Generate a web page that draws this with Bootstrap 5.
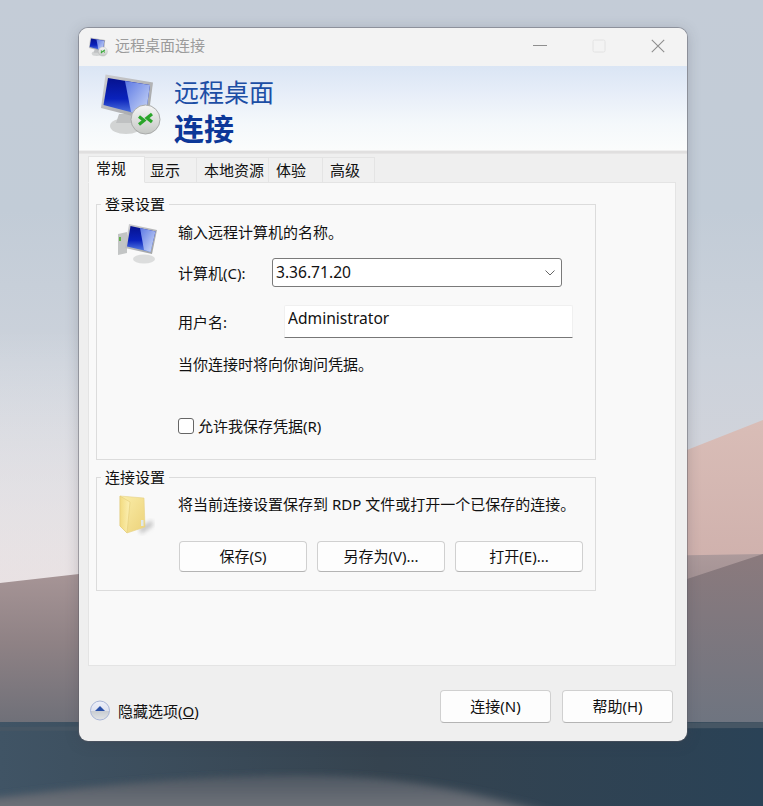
<!DOCTYPE html>
<html lang="zh-CN">
<head>
<meta charset="utf-8">
<title>远程桌面连接</title>
<link rel="stylesheet" href="https://cdn.jsdelivr.net/npm/bootstrap@5.3.0/dist/css/bootstrap.min.css">
<style>
html,body{margin:0;height:100%;background:#bcc7d3}
body{font-family:"Noto Sans","Noto Sans CJK SC",sans-serif;font-size:15px;line-height:20px;color:#111}
.desk{position:relative;width:763px;height:806px;overflow:hidden;padding:28px 0 0 79px}
.wall{position:absolute;inset:0;width:763px;height:806px}
.rdp{position:relative;width:608px;height:713px;background:#efefef;border-radius:9px;overflow:hidden;box-shadow:0 0 0 1px rgba(90,90,100,.45),0 2px 14px rgba(60,60,70,.25)}
.tbar{height:38px;background:#f3f3f3}
.tbar .ttl{font-size:15px;color:#9b9b9b;margin:0 0 4px 6px}
.tbar .ico{margin-left:8px}
.wbtn{width:59px;height:36px}
.banner{height:84px;background:linear-gradient(#dae5f4,#e6edf8 30%,#f4f8fb 68%,#fbfcfc)}
.banner .txt{margin-left:8px;padding-top:8px}
.b1{font-size:25px;line-height:37px;color:#1c4ea5}
.b2{font-size:30px;line-height:36px;font-weight:700;color:#0c3798}
.sep{height:4px;background:#e0dfdf;border-top:1px solid #f0f0f0;border-bottom:1px solid #e6e5e5}
.tabs{padding:2px 0 0 9px;border:0;height:28px;align-items:flex-end;flex-wrap:nowrap}
.tabs .nav-link{height:26px;margin:0 0 -1px;padding:2px 0 0 7px;border:1px solid #e4e4e4;border-left:0;border-radius:0;color:#111;background:#f0f0f0;white-space:nowrap;font-size:15px;line-height:20px}
.tabs .nav-link.active{height:27px;padding:1px 0 0 7px;border:1px solid #e4e4e4;border-bottom-color:#f9f9f9;background:#f9f9f9;color:#111;position:relative;z-index:1}
.t1 .nav-link{width:57px}.t2 .nav-link{width:52px;padding-left:5px}.t3 .nav-link{width:72px}.t4 .nav-link{width:54px}.t5 .nav-link{width:52px}
.panel{width:588px;height:484px;margin-left:9px;background:#f9f9f9;border:1px solid #e4e4e4;padding:11px 0 0 7px}
fieldset.grp{width:500px;border:1px solid #dcdcdc;padding:0;margin:0}
fieldset.grp legend{float:none;width:auto;margin:0 0 0 4px;padding:0 4px;font-size:15px;line-height:20px}
fieldset.g2{margin-top:7px}
.icol{width:81px;flex:none}
.g1 .body{padding:8px 0 23px}
.g2 .body{padding:7px 0 18px}
.lab1{width:94px;flex:none}
.lab2{width:106px;flex:none}
.combo{width:290px;height:29px;padding:0 30px 2px 3px;font:inherit;font-size:15.6px;color:#111;border:1px solid #7a7a7a;border-radius:3px;box-shadow:none;background-color:#fff;background-position:right 4px center;background-size:14px 14px;background-image:url("data:image/svg+xml,%3csvg xmlns='http://www.w3.org/2000/svg' viewBox='0 0 14 14'%3e%3cpath fill='none' stroke='%23666' d='M2.5 4.5 7 9l4.5-4.5'/%3e%3c/svg%3e")}
.user{width:289px;height:33px;padding:0 3px 8px;font:inherit;font-size:15.6px;color:#111;border:1px solid #f0f0f0;border-bottom:1px solid #777;border-radius:2px 2px 0 0;background:#fff;box-shadow:none}
.mt16{margin-top:16px}.mt18{margin-top:18px}.mt42{margin-top:42px}.mt27{margin-top:27px}
.form-check .chk{width:16px;height:16px;float:none;margin:0 4px 0 0;border:1px solid #666;border-radius:3px;background-color:#fff;flex:none}
.keep{min-height:20px;margin-bottom:0}
.btns{margin-left:1px;gap:10px}
.wb{width:128px;height:31px;padding:0 0 2px;font-size:15px;line-height:20px;color:#111;background:#fdfdfd;border:1px solid #d0d0d0;border-bottom-color:#b4b4b4;border-radius:4px}
.wb2{width:111px;height:33px;padding-bottom:2px}
.foot{padding:0 14px 0 11px}
.more-wrap{margin-top:34px}
.foot-btns{margin-top:24px;gap:11px}
</style>
</head>
<body>
<div class="desk">
  <svg class="wall" viewBox="0 0 763 806" preserveAspectRatio="none" aria-hidden="true">
    <defs>
      <linearGradient id="sky" x1="0" y1="0" x2="0" y2="1">
        <stop offset="0" stop-color="#c4ccd7"/><stop offset=".35" stop-color="#c2ccd7"/><stop offset=".6" stop-color="#ccd2db"/><stop offset="1" stop-color="#d8d5da"/>
      </linearGradient>
      <linearGradient id="skyl" x1="0" y1="0" x2="0" y2="1">
        <stop offset="0" stop-color="#fff" stop-opacity="0"/><stop offset="1" stop-color="#efe6e6" stop-opacity=".75"/>
      </linearGradient>
      <linearGradient id="pink" x1="0" y1="0" x2="0" y2="1">
        <stop offset="0" stop-color="#d9bdb7"/><stop offset="1" stop-color="#cdaeaa"/>
      </linearGradient>
      <linearGradient id="dune" x1="0" y1="0" x2="0" y2="1">
        <stop offset="0" stop-color="#ad9a9b"/><stop offset=".5" stop-color="#8f8285"/><stop offset="1" stop-color="#6c6e77"/>
      </linearGradient>
      <linearGradient id="dune2" x1="0" y1="0" x2="0" y2="1">
        <stop offset="0" stop-color="#8b7a7d"/><stop offset="1" stop-color="#6d7480"/>
      </linearGradient>
      <linearGradient id="water" x1="0" y1="0" x2="1" y2="0">
        <stop offset="0" stop-color="#405465"/><stop offset=".5" stop-color="#35434f"/><stop offset="1" stop-color="#2a4256"/>
      </linearGradient>
      <linearGradient id="sand" x1="0" y1="0" x2="0" y2="1">
        <stop offset="0" stop-color="#4c5661"/><stop offset=".6" stop-color="#666b73"/><stop offset="1" stop-color="#72757b"/>
      </linearGradient>
      <filter id="blur" x="-10%" y="-50%" width="120%" height="200%"><feGaussianBlur stdDeviation="14 3"/></filter>
    </defs>
    <rect width="763" height="600" fill="url(#sky)"/>
    <rect x="0" y="330" width="90" height="260" fill="url(#skyl)"/>
    <polygon points="560,500 763,420 763,600 560,600" fill="url(#pink)"/>
    <polygon points="0,583 79,574 400,560 763,554 763,730 0,730" fill="url(#dune)"/>
    <polygon points="500,640 687,579 763,554 763,730 500,730" fill="url(#dune2)"/>
    <rect y="722" width="763" height="84" fill="url(#water)"/>
    <polygon points="0,727 763,722 763,728 0,731" fill="#465664"/>
    <path d="M-40 815V802C50 792 150 776 300 775 400 775 470 790 550 815Z" fill="url(#sand)" filter="url(#blur)"/>
  </svg>

  <div class="rdp d-flex flex-column">
    <div class="tbar d-flex align-items-center">
      <svg class="ico" width="22" height="22" viewBox="0 0 70 70" aria-hidden="true"><use href="#mon"/></svg>
      <span class="ttl">远程桌面连接</span>
      <div class="ms-auto d-flex align-self-start">
        <div class="wbtn d-flex align-items-center justify-content-center"><svg width="14" height="14" viewBox="0 0 14 14"><path d="M0 6.500h14" stroke="#8e8e8e" stroke-width="1"/></svg></div>
        <div class="wbtn d-flex align-items-center justify-content-center"><svg width="14" height="14" viewBox="0 0 14 14"><rect x="1" y="1" width="12" height="12" rx="1.500" fill="none" stroke="#e2e2e2"/></svg></div>
        <div class="wbtn d-flex align-items-center justify-content-center"><svg width="14" height="14" viewBox="0 0 14 14"><path d="M.8.8l12.4 12.4M13.2.8.8 13.2" stroke="#8e8e8e" stroke-width="1.100"/></svg></div>
      </div>
    </div>

    <div class="banner d-flex">
      <svg width="87" height="70" viewBox="-16 0 87 70" class="mt-1" aria-hidden="true">
        <defs>
          <linearGradient id="fr" x1="0" y1="0" x2="1" y2="1"><stop offset="0" stop-color="#cfcfd1"/><stop offset="1" stop-color="#9ea0a2"/></linearGradient>
          <linearGradient id="scr" x1="0" y1="0" x2="0" y2="1"><stop offset="0" stop-color="#06128e"/><stop offset=".55" stop-color="#0a22bc"/><stop offset="1" stop-color="#5f86e6"/></linearGradient>
          <linearGradient id="gl" x1="0" y1="0" x2="1" y2="1"><stop offset="0" stop-color="#5c78e4"/><stop offset="1" stop-color="#d3dff8"/></linearGradient>
          <linearGradient id="bd" x1="0" y1="0" x2="0" y2="1"><stop offset="0" stop-color="#f6f6f6"/><stop offset="1" stop-color="#c4c7c4"/></linearGradient>
          <symbol id="mon" viewBox="0 0 70 70">
            <ellipse cx="31" cy="56" rx="16" ry="8" fill="#d2d4d4"/>
            <path d="M24 44h14l3 9H21z" fill="#bfc1c2"/>
            <polygon points="10.500,4.500 58,12.500 53,50 6,38" fill="url(#fr)"/>
            <polygon points="13,8 55,15 50.500,46 8.500,35" fill="url(#scr)"/>
            <polygon points="30,11 55,15 50.500,46 36,42" fill="url(#gl)"/>
            <circle cx="50.500" cy="49.500" r="14.500" fill="url(#bd)" stroke="#a9abaa"/>
            <path d="M44 46.500l5 4-5 4M57 44l-5 4 5 4" fill="none" stroke="#2aa52a" stroke-width="3.200"/>
          </symbol>
        </defs>
        <use href="#mon" width="70" height="70"/>
      </svg>
      <div class="txt">
        <div class="b1">远程桌面</div>
        <div class="b2">连接</div>
      </div>
    </div>
    <div class="sep"></div>

    <ul class="nav nav-tabs tabs">
      <li class="nav-item t1"><a class="nav-link active" href="#">常规</a></li>
      <li class="nav-item t2"><a class="nav-link" href="#">显示</a></li>
      <li class="nav-item t3"><a class="nav-link" href="#">本地资源</a></li>
      <li class="nav-item t4"><a class="nav-link" href="#">体验</a></li>
      <li class="nav-item t5"><a class="nav-link" href="#">高级</a></li>
    </ul>

    <div class="panel">
      <fieldset class="grp g1">
        <legend>登录设置</legend>
        <div class="d-flex body">
          <div class="icol ps-3">
            <svg width="48" height="44" viewBox="0 0 48 44" aria-hidden="true">
              <polygon points="5,12 14,10 14,31 5,33" fill="#c3c5c5"/>
              <rect x="6" y="15" width="2" height="4" fill="#63b04a"/>
              <ellipse cx="31" cy="37" rx="11" ry="4.500" fill="#dcdddd"/>
              <polygon points="16,2 44,8 39,32 12,26" fill="url(#fr)"/>
              <polygon points="17.500,4 42.500,9.500 37.500,30 14,24.500" fill="url(#scr)"/>
              <polygon points="27,6 42.500,9.500 37.500,30 31,28" fill="url(#gl)"/>
            </svg>
          </div>
          <div class="flex-grow-1">
            <div>输入远程计算机的名称。</div>
            <div class="d-flex align-items-center mt16">
              <label class="lab1" for="c">计算机(C):</label>
              <select id="c" class="form-select combo"><option>3.36.71.20</option></select>
            </div>
            <div class="d-flex align-items-center mt18">
              <label class="lab2" for="u">用户名:</label>
              <input id="u" class="form-control user" value="Administrator">
            </div>
            <div class="mt16">当你连接时将向你询问凭据。</div>
            <div class="form-check keep d-flex align-items-center p-0 mt42">
              <input id="s" class="form-check-input chk" type="checkbox">
              <label class="form-check-label" for="s">允许我保存凭据(R)</label>
            </div>
          </div>
        </div>
      </fieldset>

      <fieldset class="grp g2">
        <legend>连接设置</legend>
        <div class="d-flex body">
          <div class="icol ps-3">
            <svg width="44" height="46" viewBox="0 0 44 46" aria-hidden="true">
              <defs>
                <linearGradient id="fb" x1="0" y1="0" x2="1" y2="1"><stop offset="0" stop-color="#fbeeaa"/><stop offset="1" stop-color="#ecd27a"/></linearGradient>
                <linearGradient id="ff" x1="0" y1="0" x2="1" y2="0"><stop offset="0" stop-color="#f2db80"/><stop offset="1" stop-color="#fcf0b4"/></linearGradient>
                <filter id="fs"><feGaussianBlur stdDeviation="2"/></filter>
              </defs>
              <polygon points="26,34 39,26 40,32 28,40" fill="#9b9b9b" opacity=".55" filter="url(#fs)"/>
              <polygon points="7,2 31,4 32,33 14,39 7,32" fill="url(#fb)" stroke="#e6d187" stroke-width=".6"/>
              <polygon points="7,2 17,8 14,39 7,32" fill="url(#ff)" stroke="#e3cb78" stroke-width=".6"/>
              <rect x="28" y="26" width="2.500" height="6" fill="#dfe8ea"/>
            </svg>
          </div>
          <div class="flex-grow-1">
            <div>将当前连接设置保存到 RDP 文件或打开一个已保存的连接。</div>
            <div class="d-flex mt27 btns">
              <button class="btn wb" type="button">保存(S)</button>
              <button class="btn wb" type="button">另存为(V)...</button>
              <button class="btn wb" type="button">打开(E)...</button>
            </div>
          </div>
        </div>
      </fieldset>
    </div>

    <div class="foot d-flex align-items-start">
      <div class="d-flex align-items-center more-wrap">
        <svg width="20" height="21" viewBox="0 0 20 21" aria-hidden="true">
          <defs><linearGradient id="ub" x1="0" y1="0" x2="0" y2="1"><stop offset="0" stop-color="#eef0fa"/><stop offset=".5" stop-color="#dfe3ef"/><stop offset=".55" stop-color="#c9cdd2"/><stop offset="1" stop-color="#e2e4e6"/></linearGradient></defs>
          <circle cx="10" cy="10.500" r="9.500" fill="url(#ub)" stroke="#a9b5d6"/>
          <path d="M10 6l5 5H5z" fill="#2a50a8"/>
        </svg>
        <span class="ms-2">隐藏选项(<u>O</u>)</span>
      </div>
      <div class="ms-auto d-flex foot-btns">
        <button class="btn wb wb2" type="button">连接(N)</button>
        <button class="btn wb wb2" type="button">帮助(H)</button>
      </div>
    </div>
  </div>
</div>
<script src="https://cdn.jsdelivr.net/npm/bootstrap@5.3.0/dist/js/bootstrap.bundle.min.js"></script>
</body>
</html>
